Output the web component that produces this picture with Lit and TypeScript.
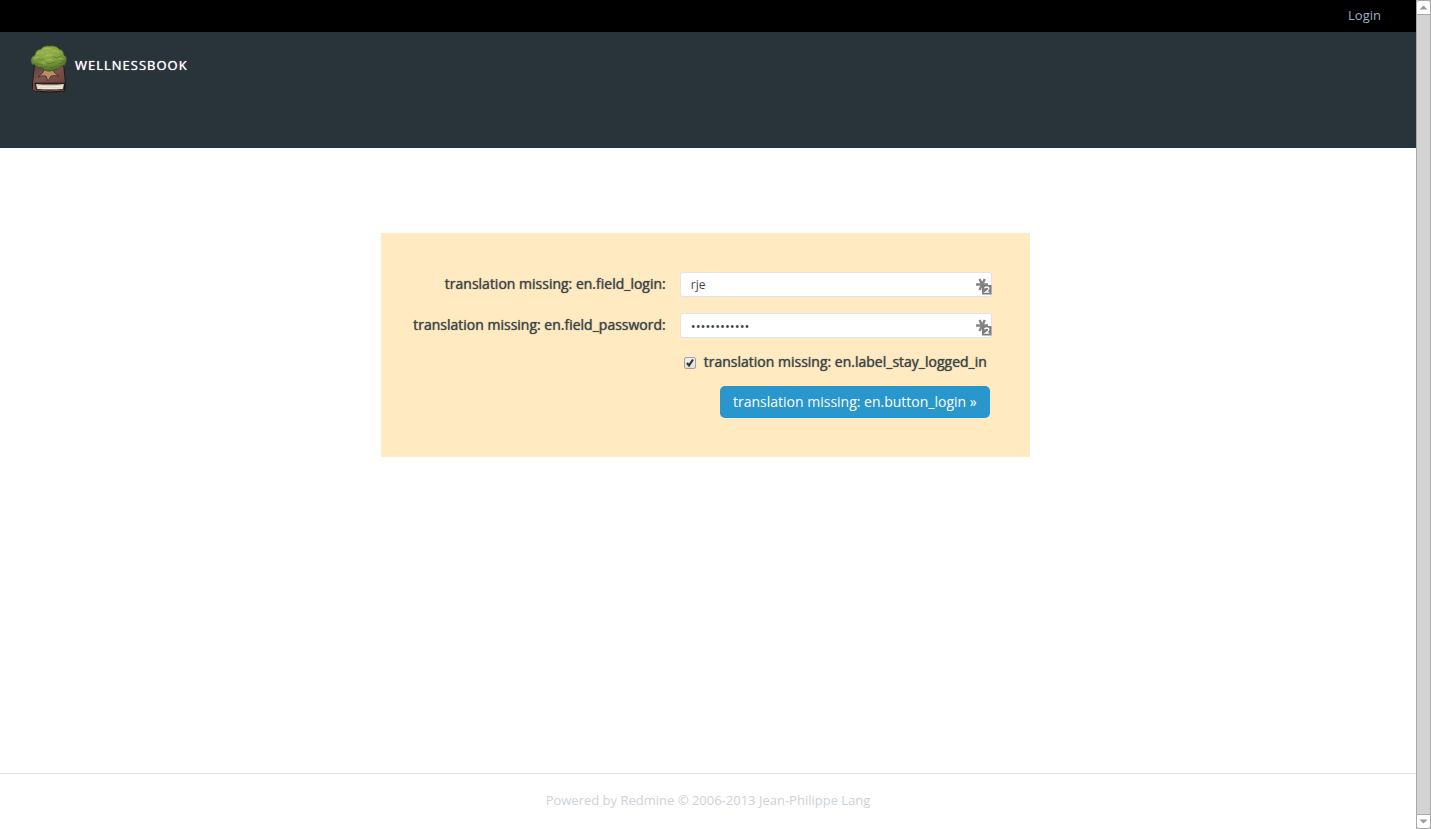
import { LitElement, html, css, svg } from "lit";
import { customElement } from "lit/decorators.js";

@customElement("book-logo")
class BookLogo extends LitElement {
  static styles = css`
    :host { display: block; }
    svg { display: block; }
  `;
  render() {
    return html`<svg width="46" height="54" viewBox="0 0 46 54" aria-hidden="true">
      <defs>
        <radialGradient id="crown" cx="45%" cy="25%" r="75%">
          <stop offset="0" stop-color="#98b24c" />
          <stop offset="0.5" stop-color="#83a340" />
          <stop offset="1" stop-color="#4d6c28" />
        </radialGradient>
        <linearGradient id="cover" x1="0" y1="0" x2="1" y2="1">
          <stop offset="0" stop-color="#5c3d3b" />
          <stop offset="0.5" stop-color="#80534f" />
          <stop offset="1" stop-color="#68413f" />
        </linearGradient>
      </defs>
      <path d="M8 23 L38 23 L40 42 L39 49 Q24 52 7 49 L6 43 Z" fill="#1b1917" />
      <path d="M9 22 L37 22 L39 41 L7 41 Z" fill="url(#cover)" />
      <path d="M7 41 L9 41 L10 49 L7 48 Z" fill="#724944" />
      <path d="M10 42 Q24 43 38 42 L37 47 Q24 48 11 47 Z" fill="#d9ceb9" />
      <path d="M11 44 Q24 46 37 44 M12 46 Q24 47 36 46" fill="none" stroke="#f5eede" stroke-width="1" />
      <path d="M8 41 H39" stroke="#3c2927" stroke-width="1" />
      <path d="M9 48 Q24 50 38 48" fill="none" stroke="#7e4f48" stroke-width="1" />
      <path d="M19 26 L27 26 Q26 30 33 34 Q28 33 25 34 L22 39 L20 34 Q16 33 12 35 Q18 31 19 26 Z" fill="#b98f63" stroke="#3b281d" stroke-width="0.7" />
      <path d="M5 20 Q4 15 9 13 Q9 8 15 7 Q18 3 24 4 Q30 3 33 7 Q38 8 38 13 Q42 15 40 20 Q40 24 36 24 Q33 28 28 28 Q21 31 16 26 Q11 26 9 23 Q5 23 5 20 Z" fill="url(#crown)" stroke="#3a4c2a" stroke-width="0.8" />
      <g fill="none" stroke-width="1" stroke-linecap="round">
        <path d="M8 21 Q12 23 16 22 M14 25 Q18 26 21 25 M24 26 Q29 26 31 24 M33 22 Q37 22 38 19 M20 21 Q25 23 29 20 M12 17 Q15 19 18 17 M27 15 Q31 17 35 14" stroke="#496823" opacity="0.5" />
        <path d="M11 12 Q14 10 17 11 M18 7 Q22 5 25 7 M27 9 Q31 8 33 11 M8 17 Q10 15 12 15 M19 14 Q23 12 26 13 M21 18 Q24 17 26 18 M33 17 Q36 16 37 17 M15 21 Q17 20 19 21" stroke="#bbd064" opacity="0.6" />
      </g>
    </svg>`;
  }
}

@customElement("app-root")
class AppRoot extends LitElement {
  static styles = css`
    :host {
      display: flex;
      min-height: 100vh;
      background: #fff;
      color: #3e4649;
      font-family: "Open Sans", "Noto Sans", sans-serif;
      font-size: 14px;
      line-height: 20px;
    }
    * { box-sizing: border-box; }
    .page { flex: 1; display: flex; flex-direction: column; min-width: 0; }
    .top {
      display: flex;
      justify-content: flex-end;
      height: 32px;
      padding: 5px 35px;
      background: #000;
      font-size: 13px;
    }
    .top a { color: #9baec8; text-decoration: none; }
    .header {
      display: flex;
      align-items: flex-start;
      height: 116px;
      padding: 10px 26px;
      background: #29333a;
    }
    .header h1 {
      margin: 13px 3px;
      color: #fff;
      font-size: 13px;
      line-height: 20px;
      font-weight: 400;
      letter-spacing: 1px;
      text-transform: uppercase;
      text-shadow: 0 0 1px currentColor;
    }
    .content {
      flex: 1;
      display: flex;
      justify-content: center;
      align-items: flex-start;
      padding: 85px 20px 40px 15px;
    }
    .card {
      display: grid;
      grid-template-columns: auto 312px;
      column-gap: 14px;
      row-gap: 14px;
      padding: 38px 38px 39px 32px;
      background: #ffeac2;
    }
    .name, .stay { text-shadow: 0 0 1px currentColor; }
    .name { text-align: right; line-height: 25px; }
    .field { position: relative; display: flex; align-items: center; height: 27px; }
    .field input {
      width: 100%;
      height: 25px;
      padding: 0 20px 0 10px;
      border: 1px solid #dfe4e8;
      border-radius: 3px;
      background: #fff;
      color: #3e4649;
      font-family: inherit;
      font-size: 12px;
      outline: none;
    }
    .field input[type="password"] { font-size: 13px; }
    .key { position: absolute; right: 0; top: 7px; }
    .stay {
      grid-column: 2;
      display: flex;
      align-items: center;
      gap: 8px;
      height: 19px;
      padding: 0 0 2px 4px;
    }
    .tick {
      appearance: none;
      width: 12px;
      height: 12px;
      margin: 2px 0 0;
      border: 1px solid #a5a29b;
      border-radius: 2px;
      background: linear-gradient(#f0f0f0, #dedede);
    }
    .box { display: grid; }
    .box > * { grid-area: 1 / 1; }
    .box svg { margin-top: 2px; pointer-events: none; visibility: hidden; z-index: 1; }
    .tick:checked + svg { visibility: visible; }
    .submit {
      grid-column: 2;
      justify-self: end;
      height: 32px;
      margin-right: 2px;
      padding: 0 13px;
      border: 0;
      border-radius: 5px;
      background: #2996cc;
      color: #fff;
      font: inherit;
      cursor: pointer;
    }
    .footer {
      height: 56px;
      padding-top: 16px;
      border-top: 1px solid #dfdfdf;
      color: #ccd2d7;
      font-size: 13px;
      text-align: center;
    }
    .footer a { color: inherit; text-decoration: none; }
    .scroll {
      flex: none;
      width: 15px;
      display: flex;
      flex-direction: column;
      background: #d3d3d3;
      border: solid #a8a8a8;
      border-width: 0 1px;
    }
    .scroll span { flex: 1; }
    .arrow {
      height: 15px;
      margin: 0 -1px;
      padding: 0;
      display: grid;
      place-items: center;
      border: 1px solid #a8a8a8;
      border-radius: 3px 3px 0 0;
      background: #fff;
    }
    .down { border-radius: 0 0 3px 3px; }
  `;

  private key() {
    return html`<svg class="key" width="16" height="17" viewBox="0 0 16 17" aria-hidden="true">
      <path d="M0 6.5 H12 M3.5 1 L8.8 12 M8.8 1 L3.5 12" stroke="#858585" stroke-width="2.4" fill="none" />
      <rect x="6" y="7" width="9.5" height="9.5" fill="#7d7d7d" />
      <path d="M8.5 10.3 Q8.8 9 10.8 9 Q13 9 12.8 10.7 Q12.7 11.8 9.3 14.2 H13.3" fill="none" stroke="#fff" stroke-width="1.3" />
    </svg>`;
  }

  private arrow(down: boolean) {
    return html`<svg width="9" height="5" viewBox="0 0 9 5" aria-hidden="true">
      ${down ? svg`<path d="M0.5 0.5H8.5L4.5 4.5Z" fill="#999" />` : svg`<path d="M0.5 4.5H8.5L4.5 0.5Z" fill="#999" />`}
    </svg>`;
  }

  render() {
    return html`
      <div class="page">
        <nav class="top"><a href="#login">Login</a></nav>
        <header class="header"><book-logo></book-logo><h1>Wellnessbook</h1></header>
        <main class="content">
          <form class="card" @submit=${(e: Event) => e.preventDefault()}>
            <label class="name" for="username">translation missing: en.field_login:</label>
            <div class="field"><input id="username" type="text" value="rje" />${this.key()}</div>
            <label class="name" for="password">translation missing: en.field_password:</label>
            <div class="field"><input id="password" type="password" value="wellnessbook" />${this.key()}</div>
            <div class="stay">
              <span class="box">
                <input class="tick" id="autologin" type="checkbox" checked />
                <svg width="12" height="12" viewBox="0 0 12 12" aria-hidden="true"><path d="M3 6 L5 8.5 L9 2.5" fill="none" stroke="#333" stroke-width="2.2" /></svg>
              </span>
              <label for="autologin">translation missing: en.label_stay_logged_in</label>
            </div>
            <button class="submit" type="submit">translation missing: en.button_login »</button>
          </form>
        </main>
        <footer class="footer">Powered by <a href="#redmine">Redmine</a> © 2006-2013 Jean-Philippe Lang</footer>
      </div>
      <div class="scroll">
        <button class="arrow" aria-label="Scroll up">${this.arrow(false)}</button>
        <span></span>
        <button class="arrow down" aria-label="Scroll down">${this.arrow(true)}</button>
      </div>
    `;
  }
}
